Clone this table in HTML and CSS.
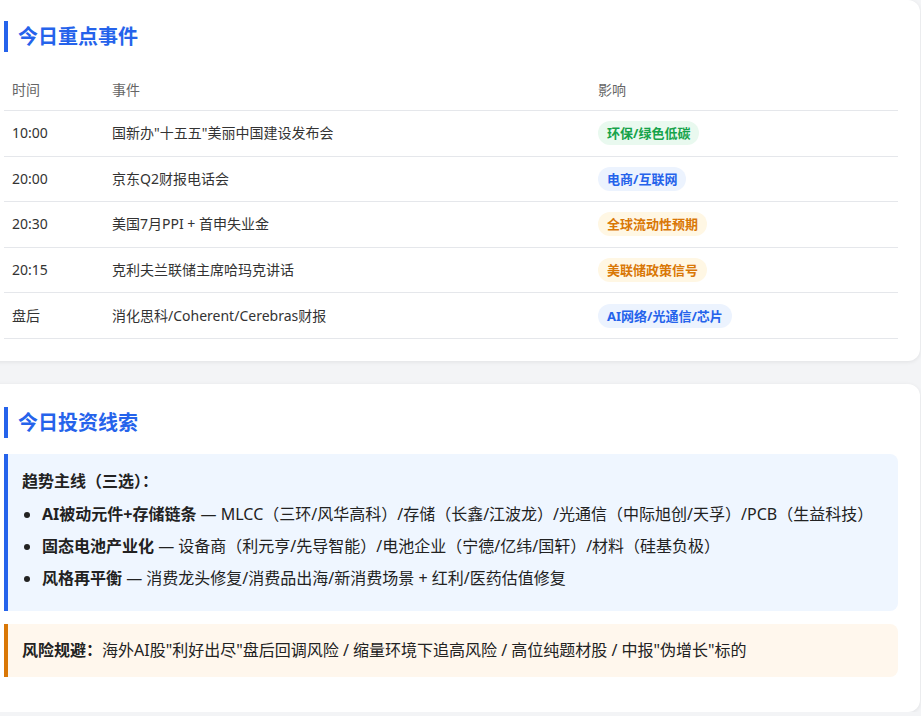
FILE: index.html
```html
<!DOCTYPE html>
<html lang="zh-CN">
<head>
<meta charset="utf-8">
<title>今日重点事件</title>
<link rel="stylesheet" href="styles.css">
</head>
<body>
<div class="page">
  <section class="card">
    <h2 class="card-title">今日重点事件</h2>
    <table class="events">
      <thead>
        <tr><th class="col-time">时间</th><th class="col-event">事件</th><th>影响</th></tr>
      </thead>
      <tbody>
        <tr><td>10:00</td><td>国新办"十五五"美丽中国建设发布会</td><td><span class="tag tag-green">环保/绿色低碳</span></td></tr>
        <tr><td>20:00</td><td>京东Q2财报电话会</td><td><span class="tag tag-blue">电商/互联网</span></td></tr>
        <tr><td>20:30</td><td>美国7月PPI + 首申失业金</td><td><span class="tag tag-orange">全球流动性预期</span></td></tr>
        <tr><td>20:15</td><td>克利夫兰联储主席哈玛克讲话</td><td><span class="tag tag-orange">美联储政策信号</span></td></tr>
        <tr><td>盘后</td><td>消化思科/Coherent/Cerebras财报</td><td><span class="tag tag-blue">AI网络/光通信/芯片</span></td></tr>
      </tbody>
    </table>
  </section>

  <section class="card card-clues">
    <h2 class="card-title">今日投资线索</h2>
    <div class="note note-blue">
      <div class="note-head">趋势主线（三选）：</div>
      <ul class="trend-list">
        <li><strong>AI被动元件+存储链条</strong> — MLCC（三环/风华高科）/存储（长鑫/江波龙）/光通信（中际旭创/天孚）/PCB（生益科技）</li>
        <li><strong>固态电池产业化</strong> — 设备商（利元亨/先导智能）/电池企业（宁德/亿纬/国轩）/材料（硅基负极）</li>
        <li><strong>风格再平衡</strong> — 消费龙头修复/消费品出海/新消费场景 + 红利/医药估值修复</li>
      </ul>
    </div>
    <div class="note note-orange">
      <strong>风险规避：</strong>海外AI股"利好出尽"盘后回调风险 / 缩量环境下追高风险 / 高位纯题材股 / 中报"伪增长"标的
    </div>
  </section>
</div>
</body>
</html>
```

FILE: styles.css
```css
* { box-sizing: border-box; }

html, body {
  margin: 0;
  padding: 0;
  background: #f3f4f6;
  overflow: hidden;
}

body {
  font-family: "Noto Sans", "Noto Sans CJK SC", sans-serif;
  color: #333;
}

.page {
  display: flex;
  flex-direction: column;
  gap: 23px;
  margin: 0 1px 0 -20px;
}

.card {
  background: #fff;
  border-radius: 12px;
  box-shadow: 0 1px 4px rgba(0, 0, 0, 0.08);
  padding: 21px 22px 22px 24px;
}

.card-clues { padding-top: 23px; }

.card-title {
  margin: 0 0 17px;
  border-left: 4px solid #2563eb;
  padding-left: 10px;
  font-size: 20px;
  line-height: 31px;
  font-weight: 700;
  color: #2563eb;
}

.card-clues .card-title { margin-bottom: 16px; }

.events {
  width: 100%;
  border-collapse: collapse;
  font-size: 14px;
}

.events th {
  text-align: left;
  font-weight: 400;
  color: #666;
  padding: 10px 8px;
  line-height: 21px;
  border-bottom: 1px solid #e5e7eb;
}

.events .col-time { width: 100px; }
.events .col-event { width: 486px; }

.events td {
  padding: 10.3px 8px;
  line-height: 24px;
  border-bottom: 1px solid #e5e7eb;
  color: #333;
}

.tag {
  display: inline-block;
  padding: 3px 9px;
  border-radius: 12px;
  font-size: 13px;
  line-height: 18px;
  font-weight: 700;
  vertical-align: top;
}

.tag-green { background: #e9f9ef; color: #16a34a; }
.tag-blue { background: #ecf3fe; color: #2563eb; }
.tag-orange { background: #fff7e4; color: #d97706; }

.note {
  border-radius: 0 8px 8px 0;
  font-size: 16px;
  color: #222;
}

.note-blue {
  background: #eff6ff;
  border-left: 4px solid #2563eb;
  padding: 16px 14px 17px;
  margin-bottom: 13px;
  line-height: 22px;
}

.note-head { font-weight: 700; }

.trend-list {
  margin: 6px 0 0;
  padding-left: 20px;
}

.trend-list li { line-height: 32px; }

.note-orange {
  background: #fff7ed;
  border-left: 4px solid #d97706;
  padding: 16px 14px;
  line-height: 21px;
  margin-bottom: 13px;
}
```
